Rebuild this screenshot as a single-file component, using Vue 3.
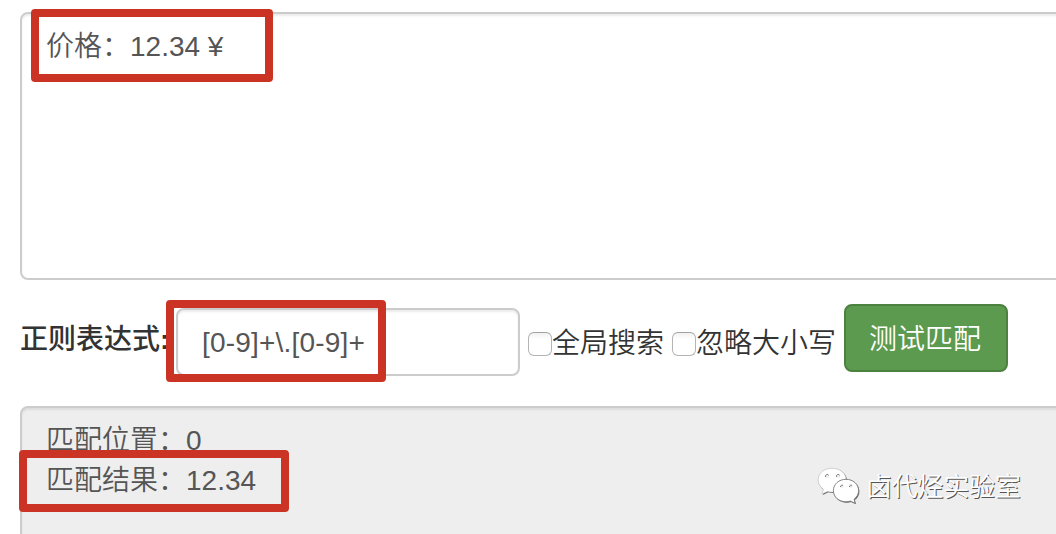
<script setup>
import { ref } from 'vue'

const source = ref('价格：12.34 ¥')
const pattern = ref('[0-9]+\\.[0-9]+')
const options = [
  { id: 'global', label: '全局搜索' },
  { id: 'case', label: '忽略大小写' },
]
const results = [
  { name: '匹配位置：', value: '0' },
  { name: '匹配结果：', value: '12.34' },
]
</script>

<template>
  <main class="page">
    <section class="panel source"><p>{{ source }}</p></section>

    <section class="toolbar">
      <span class="label">正则表达式<b>:</b></span>
      <div class="pattern">{{ pattern }}</div>
      <div v-for="o in options" :key="o.id" class="option" :class="o.id">
        <span class="box"></span><span class="option-text">{{ o.label }}</span>
      </div>
      <button class="run" type="button">测试匹配</button>
    </section>

    <section class="panel result">
      <p v-for="r in results" :key="r.name">{{ r.name }}{{ r.value }}</p>
    </section>

    <div class="mark mark-source"></div>
    <div class="mark mark-pattern"></div>
    <div class="mark mark-result"></div>

    <div class="watermark">
      <svg width="44" height="38" viewBox="0 0 44 38">
        <g fill="#666" transform="translate(0.8 0.9)">
          <path d="M15 1.200C7 1.200 1.200 6.300 1.200 13c0 4 2 7.100 5.200 9.400L5 27l5.600-2.600c1.700.5 3.300.7 5 .7 8 0 13.600-5.400 13.600-12.100S23 1.200 15 1.200Z" />
          <path d="M29 12.300c-7.200 0-12.600 5-12.600 11.300S21.800 34.800 29 34.800c1.600 0 3-.2 4.400-.7l4.700 2.200-1-4.100c2.800-2.100 4.500-5 4.500-8.600 0-6.300-5.400-11.300-12.600-11.300Z" />
        </g>
        <g fill="#fff" stroke="#aaa" stroke-width="0.5" stroke-linejoin="round">
          <path d="M15 1.200C7 1.200 1.200 6.300 1.200 13c0 4 2 7.100 5.200 9.400L5 27l5.600-2.600c1.700.5 3.300.7 5 .7 8 0 13.600-5.400 13.600-12.100S23 1.200 15 1.200Z" />
          <path stroke="#777" stroke-width="0.9" d="M29 12.300c-7.200 0-12.600 5-12.600 11.300S21.800 34.800 29 34.800c1.600 0 3-.2 4.400-.7l4.700 2.200-1-4.100c2.800-2.100 4.500-5 4.500-8.600 0-6.300-5.400-11.300-12.600-11.300Z" />
        </g>
        <g fill="#eee">
          <circle cx="10.300" cy="9.400" r="1.800" />
          <circle cx="21.300" cy="9.400" r="1.800" />
          <circle cx="25" cy="19.600" r="1.500" />
          <circle cx="34" cy="19.600" r="1.500" />
        </g>
        <g fill="none" stroke="#666" stroke-width="0.9">
          <path d="M8.500 9.900a1.800 1.800 0 0 1 3.200-1.600M19.500 9.900a1.800 1.800 0 0 1 3.200-1.600M23.500 20a1.500 1.500 0 0 1 2.600-1.300M32.500 20a1.500 1.500 0 0 1 2.600-1.300" />
        </g>
      </svg>
      <span>卤代烃实验室</span>
    </div>
  </main>
</template>

<style>
body {
  margin: 0;
  overflow: hidden;
  background: #fff;
}
</style>

<style scoped>
.page {
  position: relative;
  box-sizing: border-box;
  width: 1056px;
  height: 534px;
  padding: 12px 0 0 20px;
  overflow: hidden;
  font-family: "Liberation Sans", "Noto Sans CJK SC", sans-serif;
  font-size: 28px;
  font-weight: 350;
  color: #333;
  white-space: nowrap;
}
.panel {
  box-sizing: border-box;
  width: 1060px;
  border: 2px solid #ccc;
  border-radius: 8px;
  box-shadow: inset 0 2px 2px rgba(0, 0, 0, 0.075);
  color: #555;
}
.panel p {
  margin: 0;
  line-height: 40px;
}
.source {
  height: 268px;
  padding: 13px 24px;
}
.toolbar {
  display: flex;
  align-items: flex-start;
  height: 78px;
  margin-top: 24px;
}
.label {
  width: 156px;
  line-height: 40px;
  margin-top: 16px;
  font-weight: 500;
}
.label b {
  font-weight: 700;
}
.pattern {
  box-sizing: border-box;
  width: 344px;
  height: 68px;
  margin-top: 4px;
  padding: 0 24px;
  border: 2px solid #ccc;
  border-radius: 8px;
  box-shadow: inset 0 2px 2px rgba(0, 0, 0, 0.075);
  line-height: 66px;
  letter-spacing: 0.2px;
  color: #555;
}
.option {
  display: flex;
  align-items: center;
  height: 40px;
  margin: 19px 0 0 8px;
}
.box {
  box-sizing: border-box;
  width: 24px;
  height: 24px;
  margin-top: 2px;
  border: 1px solid #b4b4b4;
  border-top-color: #a0a0a0;
  border-radius: 6px;
  background: linear-gradient(#f2f2f2, #fff 30%);
}
.option-text {
  position: relative;
  top: 1px;
  line-height: 40px;
}
.run {
  box-sizing: border-box;
  width: 164px;
  height: 68px;
  margin: 0 0 0 8px;
  padding: 0 2px 2px 0;
  border: 2px solid #4b823f;
  border-radius: 8px;
  background: #5c9a4f;
  color: #fff;
  font: inherit;
}
.result {
  height: 180px;
  margin-top: 24px;
  padding: 13px 24px;
  background: #eee;
}
.mark {
  position: absolute;
  box-sizing: border-box;
  border: 8px solid #cb3424;
  border-radius: 4px;
}
.mark-source {
  left: 31px;
  top: 9px;
  width: 242px;
  height: 73px;
}
.mark-pattern {
  left: 166px;
  top: 300px;
  width: 220px;
  height: 82px;
}
.mark-result {
  left: 19px;
  top: 450px;
  width: 270px;
  height: 62px;
}
.watermark {
  position: absolute;
  left: 817px;
  top: 467px;
  display: flex;
  gap: 5px;
  font-size: 25.8px;
  line-height: 40px;
  color: #fff;
  text-shadow: 1px 1px 0 #555;
}
</style>
